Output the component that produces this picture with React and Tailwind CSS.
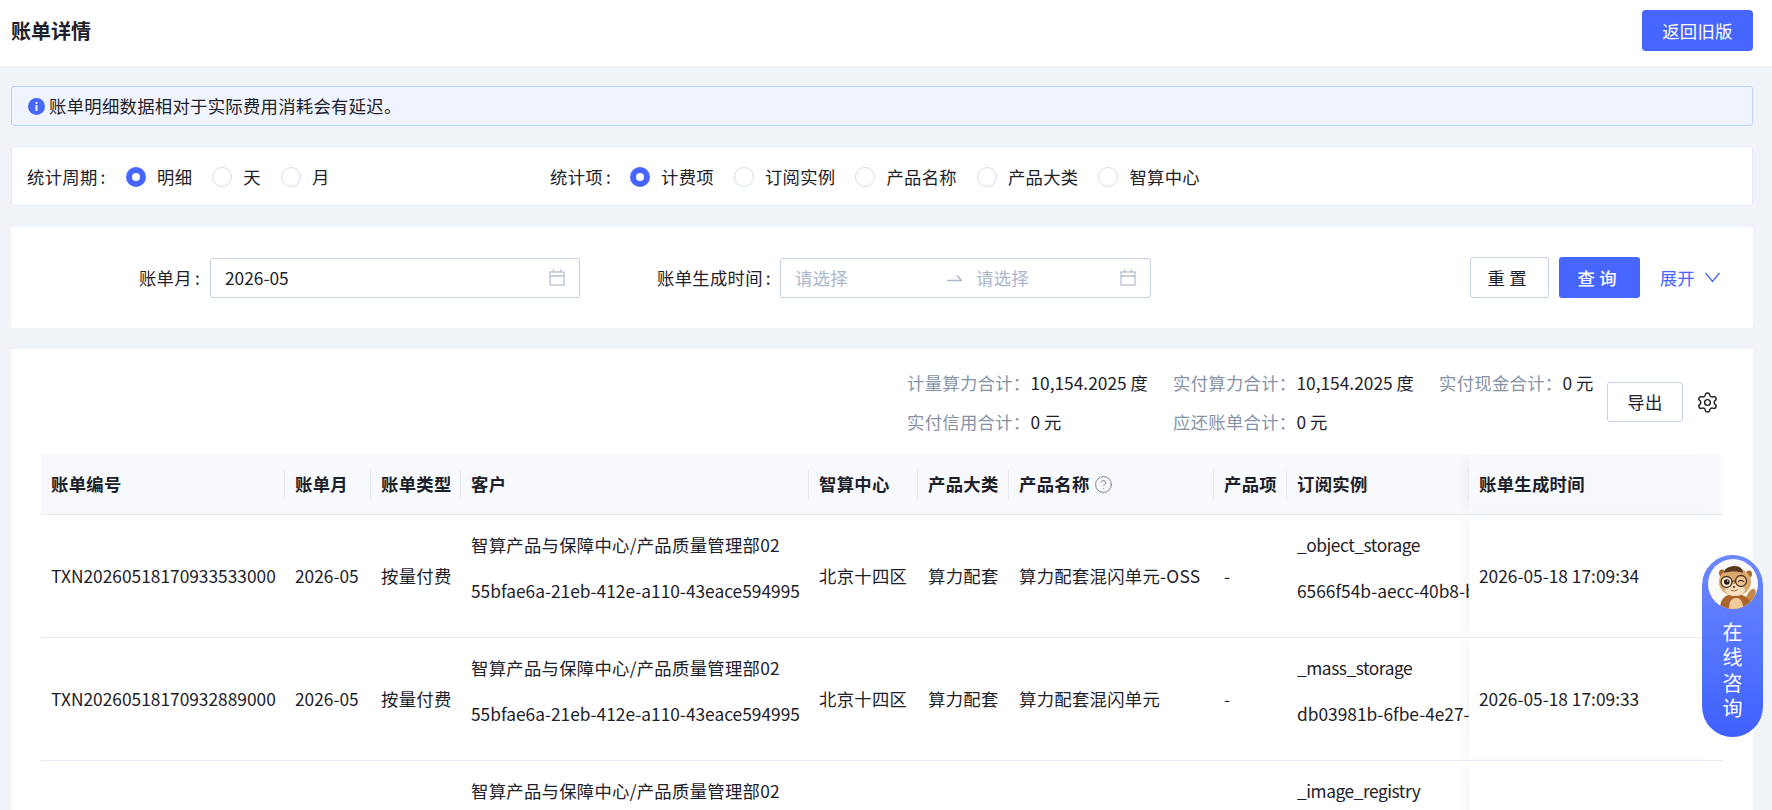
import { CircleHelp, Settings } from "lucide-react";

const cycleOptions = ["明细", "天", "月"];
const itemOptions = ["计费项", "订阅实例", "产品名称", "产品大类", "智算中心"];

const columns = [
  { title: "账单编号", width: "w-[244px]" },
  { title: "账单月", width: "w-[86px]" },
  { title: "账单类型", width: "w-[90px]" },
  { title: "客户", width: "w-[348px]" },
  { title: "智算中心", width: "w-[109px]" },
  { title: "产品大类", width: "w-[91px]" },
  { title: "产品名称", width: "w-[205px]", help: true },
  { title: "产品项", width: "w-[73px]" },
  { title: "订阅实例", width: "w-[182px]" },
];

const rows = [
  {
    id: "TXN20260518170933533000",
    name: "算力配套混闪单元-OSS",
    instance: "_object_storage",
    uuid: "6566f54b-aecc-40b8-b1d2-0f9a5c7e3a21",
    time: "2026-05-18 17:09:34",
  },
  {
    id: "TXN20260518170932889000",
    name: "算力配套混闪单元",
    instance: "_mass_storage",
    uuid: "db03981b-6fbe-4e27-9c41-7ab2d6e01f58",
    time: "2026-05-18 17:09:33",
  },
  {
    id: "TXN20260518170932241000",
    name: "算力配套镜像仓库",
    instance: "_image_registry",
    uuid: "a71c02de-93f4-4b16-8e05-c2d47f9b6a10",
    time: "2026-05-18 17:09:32",
  },
];

const CalendarIcon = () => (
  <svg width="16" height="17" viewBox="0 0 16 17" fill="none" stroke="#b4c0d2" strokeWidth="1.3">
    <rect x="1" y="3" width="14" height="13" />
    <path d="M1 7h14M4.5 0.5v3M11.5 0.5v3" />
  </svg>
);

const Colon = () => <span className="ml-[3px]">:</span>;

const Radio = ({ label, checked }) => (
  <div className="flex items-center gap-[11px]">
    {checked ? (
      <span className="flex h-5 w-5 items-center justify-center rounded-full bg-[#4766ff]">
        <span className="h-2 w-2 rounded-full bg-white" />
      </span>
    ) : (
      <span className="h-5 w-5 rounded-full border border-[#d3deec] bg-white" />
    )}
    <span>{label}</span>
  </div>
);

const Summary = ({ label, value }) => (
  <div>
    <span className="text-[#8592a6]">{label}：</span>
    <span className="tracking-normal">{value}</span>
  </div>
);

const Squirrel = () => (
  <svg width="50" height="50" viewBox="0 0 50 50" className="rounded-full">
    <rect width="50" height="50" fill="#fbf9f6" />
    {/* waving arm */}
    <path d="M38 38 C41 33 43 29 46 30 C49 31 48 38 44 43 L38 46 Z" fill="#c48748" />
    {/* body */}
    <path d="M12 50 C12 40 17 35 27 35 C37 35 43 40 43 50 Z" fill="#a9652d" />
    <path d="M21 50 C21 43 23 39 28 39 C33 39 35 43 35 50 Z" fill="#efcb9b" />
    {/* ears */}
    <ellipse cx="14" cy="14" rx="3" ry="3.5" fill="#a9652d" />
    <ellipse cx="41" cy="15" rx="3" ry="3.5" fill="#a9652d" />
    {/* head */}
    <ellipse cx="27" cy="23" rx="16" ry="14" fill="#dca96c" />
    <ellipse cx="27" cy="31" rx="10" ry="6" fill="#f6dfbd" />
    <path d="M16 14 C16 9 22 7 27 7 C32 7 35 10 35 14 C30 12 22 12 16 14 Z" fill="#5b3a22" />
    {/* glasses */}
    <circle cx="18.5" cy="23" r="5.5" fill="#f6e7cf" stroke="#4a3120" strokeWidth="1.3" />
    <circle cx="33" cy="22" r="5.5" fill="#ecc694" stroke="#4a3120" strokeWidth="1.3" />
    <path d="M24 22.5 L27.5 22" stroke="#4a3120" strokeWidth="1.2" />
    <circle cx="18.8" cy="23" r="2.8" fill="#20150f" />
    <circle cx="19.7" cy="22" r="0.8" fill="#fff" />
    <path d="M30 22.8 Q33 20 36 22.8" fill="none" stroke="#4a3120" strokeWidth="1.2" />
    {/* mouth */}
    <ellipse cx="26" cy="28" rx="1.3" ry="0.9" fill="#6e4426" />
    <path d="M22.5 31 Q26 33.5 30 30.5" fill="none" stroke="#9a5f33" strokeWidth="0.9" />
  </svg>
);

export default function App() {
  return (
    <div className="relative h-[810px] overflow-hidden bg-[#f0f3f8] font-['Noto_Sans_CJK_SC',sans-serif] text-[17.33px] tracking-[0.3px] text-[#1d2129]">
      {/* Header */}
      <div className="flex h-[66px] items-center justify-between bg-white pl-[11px] pr-[19px]">
        <h1 className="mb-[5px] text-[20px] font-semibold tracking-normal">账单详情</h1>
        <button className="mb-[5px] h-[41px] w-[111px] rounded bg-[#4766ff] text-white">返回旧版</button>
      </div>

      <div className="pl-[11px] pr-[19px] pt-5">
        {/* Notice */}
        <div className="flex h-10 items-center gap-1 rounded-[3px] border border-[#bdd0ff] bg-[#f0f4ff] pl-4">
          <svg width="17" height="17" viewBox="0 0 17 17">
            <circle cx="8.5" cy="8.5" r="8.5" fill="#4766ff" />
            <rect x="7.6" y="7" width="1.8" height="6" fill="#fff" />
            <rect x="7.6" y="4" width="1.8" height="1.9" fill="#fff" />
          </svg>
          <span>账单明细数据相对于实际费用消耗会有延迟。</span>
        </div>

        {/* Statistic options */}
        <div className="mt-5 flex h-[60px] items-center rounded-[3px] border border-[#e4eaf3] bg-white pl-[15px] pt-0.5">
          <div className="flex w-[523px] items-center">
            <span className="w-[99px]">统计周期<Colon /></span>
            <div className="flex gap-5">
              {cycleOptions.map((o, i) => (
                <Radio key={o} label={o} checked={i === 0} />
              ))}
            </div>
          </div>
          <div className="flex items-center">
            <span className="w-[80px]">统计项<Colon /></span>
            <div className="flex gap-5">
              {itemOptions.map((o, i) => (
                <Radio key={o} label={o} checked={i === 0} />
              ))}
            </div>
          </div>
        </div>

        {/* Filters */}
        <div className="mt-[21px] flex h-[101px] items-center rounded-[3px] bg-white pr-[33px]">
          <label className="w-[189px] text-right">账单月<Colon /></label>
          <div className="ml-2.5 flex h-10 w-[370px] items-center justify-between rounded-[3px] border border-[#c5d1e3] px-3.5 tracking-normal">
            <span>2026-05</span>
            <CalendarIcon />
          </div>
          <label className="ml-[77px] w-[113px] whitespace-nowrap">账单生成时间<Colon /></label>
          <div className="ml-2.5 flex h-10 w-[371px] items-center rounded-[3px] border border-[#c5d1e3] px-3.5 text-[#a9b6cb]">
            <span className="w-[152px]">请选择</span>
            <svg width="15" height="8" viewBox="0 0 15 8" fill="none" stroke="#a9b6cb" strokeWidth="1.3">
              <path d="M0 6.5h14.5L10 1.5" />
            </svg>
            <span className="ml-3.5 flex-1">请选择</span>
            <CalendarIcon />
          </div>
          <button className="ml-auto h-[41px] w-[79px] rounded-[3px] border border-[#c5d1e3] tracking-[0.25em]">重置</button>
          <button className="ml-2.5 h-[41px] w-[81px] rounded-[3px] bg-[#4766ff] font-medium tracking-[0.25em] text-white">查询</button>
          <div className="ml-5 flex items-center gap-2.5 text-[#4766ff]">
            <span>展开</span>
            <svg width="15" height="11" viewBox="0 0 15 11" fill="none" stroke="currentColor" strokeWidth="1.3">
              <path d="M0.5 1 L7.5 9.5 L14.5 1" />
            </svg>
          </div>
        </div>

        {/* Table card */}
        <div className="mt-[21px] rounded-[3px] bg-white px-[30px] pt-[15px]">
          <div className="flex items-start justify-end pr-1">
            <div className="grid grid-cols-[266px_266px_168px] leading-[38.5px]">
              <Summary label="计量算力合计" value="10,154.2025 度" />
              <Summary label="实付算力合计" value="10,154.2025 度" />
              <Summary label="实付现金合计" value="0 元" />
              <Summary label="实付信用合计" value="0 元" />
              <Summary label="应还账单合计" value="0 元" />
            </div>
            <button className="mt-[18px] h-10 w-[76px] rounded-[3px] border border-[#c5d1e3]">导出</button>
            <Settings size={23} strokeWidth={1.5} className="ml-[13px] mt-[27px]" />
          </div>

          <table className="mt-3.5 w-full table-fixed border-collapse text-left">
            <colgroup>
              {columns.map((c) => (
                <col key={c.title} className={c.width} />
              ))}
              <col className="w-[254px]" />
            </colgroup>
            <thead>
              <tr className="h-[59px] border-b border-[#e4e9f2] bg-[#f7f9fc]">
                {columns.map((c) => (
                  <th
                    key={c.title}
                    className="relative whitespace-nowrap px-2.5 font-semibold after:absolute after:right-0 after:top-[15px] after:h-[29px] after:w-px after:bg-[#e6ebf3]"
                  >
                    <span className="flex items-center gap-1">
                      {c.title}
                      {c.help && <CircleHelp size={19} strokeWidth={1.2} className="text-[#777c86]" />}
                    </span>
                  </th>
                ))}
                <th className="whitespace-nowrap px-2.5 font-semibold shadow-[-8px_0_10px_-6px_rgba(120,140,170,0.12)]">账单生成时间</th>
              </tr>
            </thead>
            <tbody>
              {rows.map((row) => (
                <tr key={row.id} className="h-[123px] border-b border-[#e4e9f2]">
                  <td className="px-2.5 whitespace-nowrap tracking-normal">{row.id}</td>
                  <td className="px-2.5 whitespace-nowrap tracking-normal">2026-05</td>
                  <td className="px-2.5 whitespace-nowrap">按量付费</td>
                  <td className="px-2.5 whitespace-nowrap">
                    <p className="mb-px leading-[45px]">智算产品与保障中心/产品质量管理部02</p>
                    <p className="mb-4 leading-[45px] tracking-normal">55bfae6a-21eb-412e-a110-43eace594995</p>
                  </td>
                  <td className="px-2.5 whitespace-nowrap">北京十四区</td>
                  <td className="px-2.5 whitespace-nowrap">算力配套</td>
                  <td className="px-2.5 whitespace-nowrap">{row.name}</td>
                  <td className="px-2.5">-</td>
                  <td className="overflow-hidden px-2.5 whitespace-nowrap">
                    <p className="mb-px leading-[45px] tracking-[-0.45px]">{row.instance}</p>
                    <p className="mb-4 leading-[45px] tracking-normal">{row.uuid}</p>
                  </td>
                  <td className="bg-white px-2.5 whitespace-nowrap tracking-normal shadow-[-8px_0_10px_-6px_rgba(120,140,170,0.12)]">{row.time}</td>
                </tr>
              ))}
            </tbody>
          </table>
        </div>
      </div>

      {/* Floating consult button */}
      <div className="absolute left-[1702px] top-[555px] flex h-[182px] w-[61px] flex-col items-center rounded-full bg-gradient-to-b from-[#6d87ff] to-[#3f60ff] pt-1 text-white">
        <Squirrel />
        <div className="mt-[10px] text-[20px] leading-[25.3px] tracking-normal">
          <div>在</div>
          <div>线</div>
          <div>咨</div>
          <div>询</div>
        </div>
      </div>
    </div>
  );
}
